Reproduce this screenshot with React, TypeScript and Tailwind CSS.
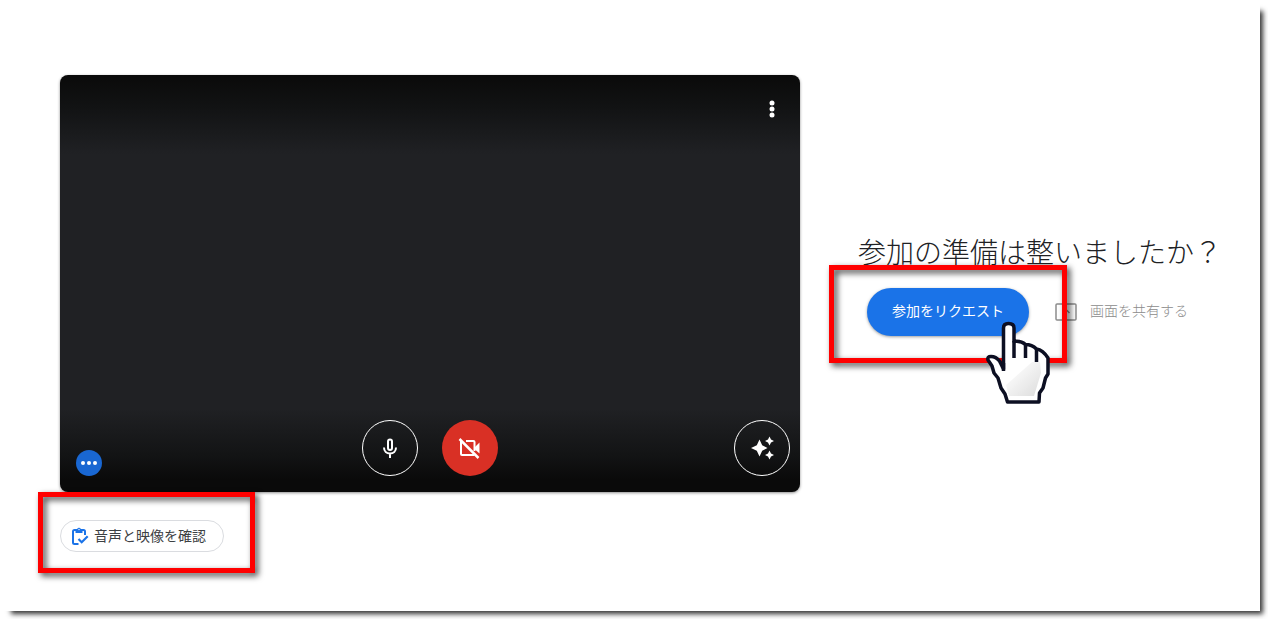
import type { ReactNode } from "react";

function Highlight({ className }: { className: string }) {
  return (
    <span
      aria-hidden="true"
      className={`pointer-events-none absolute border-5 border-[#ff0000] drop-shadow-[3px_3px_3px_rgba(0,0,0,0.75)] ${className}`}
    />
  );
}

function RoundButton({ label, className, children }: { label: string; className: string; children: ReactNode }) {
  return (
    <button
      type="button"
      aria-label={label}
      className={`flex size-14 items-center justify-center rounded-full text-white ${className}`}
    >
      {children}
    </button>
  );
}

function MoreIcon() {
  return (
    <svg viewBox="0 0 24 24" className="size-6" fill="currentColor" aria-hidden="true">
      <circle cx="12" cy="6" r="2.500" />
      <circle cx="12" cy="12" r="2.500" />
      <circle cx="12" cy="18" r="2.500" />
    </svg>
  );
}

function PresentIcon() {
  return (
    <svg viewBox="0 0 24 24" className="size-6" fill="none" stroke="currentColor" aria-hidden="true">
      <rect x="2" y="4" width="20" height="16" rx="1" strokeWidth="1.500" />
      <path d="M8.500 13 12 9.500 15.500 13" strokeWidth="1.500" />
    </svg>
  );
}

function MicIcon() {
  return (
    <svg viewBox="0 0 24 24" className="size-6" fill="none" stroke="currentColor" strokeWidth="2" aria-hidden="true">
      <rect x="10" y="3.500" width="4" height="10.500" rx="2" />
      <path d="M6 11.500C6 15.500 8.700 17.500 12 17.500S18 15.500 18 11.500M12 17.500V22" />
    </svg>
  );
}

function CameraOffIcon() {
  return (
    <svg viewBox="0 0 24 24" className="size-6" aria-hidden="true">
      <path
        d="M3 5V18Q3 19 4 19H16.500M8 5H15.500Q16.500 5 16.500 6V15"
        fill="none"
        stroke="currentColor"
        strokeWidth="2"
      />
      <path d="M17 11 21.500 6.500V17.500L17 13.500Z" fill="currentColor" />
      <path d="M1.500 3 20.500 22" stroke="currentColor" strokeWidth="2.500" />
    </svg>
  );
}

function SparkleIcon() {
  return (
    <svg viewBox="0 0 24 24" className="size-6" fill="currentColor" aria-hidden="true">
      <path d="M9.500 3.500 12.200 9.300 17.500 12 12.200 14.700 9.500 20.500 6.800 14.700 1 12 6.800 9.300Z" />
      <path d="M19.500 .500 21 3.500 24 5 21 6.500 19.500 9.500 18 6.500 15 5 18 3.500Z" />
      <path d="M19.500 14.500 21 17.500 24 19 21 20.500 19.500 23.500 18 20.500 15 19 18 17.500Z" />
    </svg>
  );
}

function ChecklistIcon() {
  return (
    <svg viewBox="0 0 18 18" className="size-[18px]" fill="none" stroke="#1a73e8" strokeWidth="2" aria-hidden="true">
      <path d="M7.500 17H3.500Q2 17 2 15.500V4.500Q2 3 3.500 3H12.500Q14 3 14 4.500V8" />
      <path d="M4.500 2H6.200A1.900 1.900 0 0 1 9.800 2H11.500V6H4.500Z" fill="#1a73e8" stroke="none" />
      <path d="M7.500 12 10.700 15.200 16.700 9.200" strokeWidth="2.200" />
      <circle cx="8" cy="2.500" r=".7" fill="#fff" stroke="none" />
    </svg>
  );
}

function HandPointer() {
  return (
    <svg
      viewBox="0 0 66 84"
      className="pointer-events-none absolute top-[33px] left-[118px] h-[84px] w-[66px]"
      aria-hidden="true"
    >
      <defs>
        <linearGradient id="palm" x1="0" y1="0" x2="1" y2="1">
          <stop offset="0" stopColor="#fff" />
          <stop offset="0.4" stopColor="#f4f4f4" />
          <stop offset="1" stopColor="#dcdcdc" />
        </linearGradient>
      </defs>
      <path
        d="M18.500 48V7Q18.500 2.500 23.500 2.500Q29 2.500 29 7V20.500Q36 19.500 40.500 23.500Q47 23.500 51.500 28Q58 29 63 37V53L60.500 57L58 67L54.500 72L54 81H22.500L20 73L16 67L13 57L9 52L7 45L3 39Q2 35.500 6 35.500Q11 35.500 14.500 40Z"
        fill="#fff"
        stroke="#0c0f22"
        strokeWidth="3.500"
        strokeLinejoin="round"
      />
      <path d="M21 64 47 41H55L56 52L49 75H24Z" fill="url(#palm)" />
      <path d="M29 20V37M40.500 24V37M51.500 28V41M18.500 42V50" fill="none" stroke="#0c0f22" strokeWidth="3.500" />
    </svg>
  );
}

export default function App() {
  return (
    <div
      lang="ja"
      className="flex min-h-screen flex-col overflow-hidden bg-white pr-2 pb-2 font-['Noto_Sans_CJK_JP','Liberation_Sans',sans-serif]"
    >
      <main className="flex grow flex-col bg-white pt-[75px] pr-[38px] pl-15 shadow-[7px_7px_5px_-4px_rgba(0,0,0,0.8)]">
        <div className="flex items-center gap-[58px]">
          <section
            aria-label="カメラのプレビュー"
            className="flex aspect-[740/417] min-w-0 grow flex-col justify-between rounded-lg bg-[#202124] bg-linear-[to_bottom,#0a0a0a_0%,#121314_8%,#202124_19%,#202124_80%,#131415_91%,#0a0a0a_97%] shadow-[0_1px_3px_rgba(0,0,0,0.45)]"
          >
            <div className="flex justify-end px-4 pt-[22px]">
              <button type="button" aria-label="その他のオプション" className="text-white">
                <MoreIcon />
              </button>
            </div>
            <div className="grid grid-cols-[1fr_auto_1fr] items-end px-2.5 pb-4">
              <button
                type="button"
                aria-label="音声の状態"
                className="ml-1.5 flex size-[26px] items-center justify-center gap-0.5 rounded-full bg-[#1967d2]"
              >
                <span className="size-1 rounded-full bg-white" />
                <span className="size-1 rounded-full bg-white" />
                <span className="size-1 rounded-full bg-white" />
              </button>
              <div className="flex gap-6">
                <RoundButton label="マイクをオフにする" className="border border-white">
                  <MicIcon />
                </RoundButton>
                <RoundButton label="カメラをオンにする" className="bg-[#d93025]">
                  <CameraOffIcon />
                </RoundButton>
              </div>
              <div className="flex justify-end">
                <RoundButton label="視覚効果を適用" className="border border-white">
                  <SparkleIcon />
                </RoundButton>
              </div>
            </div>
          </section>

          <section className="flex shrink-0 flex-col gap-[17px]">
            <h1 className="text-[28px] leading-10 font-light whitespace-nowrap text-[#202124]">
              参加の準備は整いましたか？
            </h1>
            <div className="flex items-center gap-[25px] pl-[9px]">
              <div className="relative z-10">
                <button
                  type="button"
                  className="h-12 rounded-full bg-[#1a73e8] px-[25px] pb-1 text-sm whitespace-nowrap text-white shadow-[0_1px_3px_rgba(60,64,67,0.5)]"
                >
                  参加をリクエスト
                </button>
                <Highlight className="-top-[23px] -right-[38px] -bottom-[27px] -left-[38px]" />
                <HandPointer />
              </div>
              <button
                type="button"
                className="flex items-center gap-3 text-sm font-light whitespace-nowrap text-[#8c8c8c]"
              >
                <PresentIcon />
                <span className="pb-1">画面を共有する</span>
              </button>
            </div>
          </section>
        </div>

        <div className="relative mt-7 self-start">
          <button
            type="button"
            className="flex h-8 items-center gap-[5px] rounded-full border border-[#dadce0] pr-[17px] pl-2.5 text-sm whitespace-nowrap text-[#3c4043]"
          >
            <ChecklistIcon />
            <span className="pb-0.5">音声と映像を確認</span>
          </button>
          <Highlight className="-top-7 -right-[31px] -bottom-[21px] -left-[22px]" />
        </div>
      </main>
    </div>
  );
}
